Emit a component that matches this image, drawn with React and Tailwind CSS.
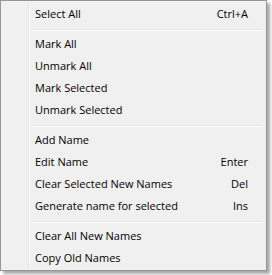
const groups = [
  [{ label: "Select All", key: "Ctrl+A" }],
  [
    { label: "Mark All" },
    { label: "Unmark All" },
    { label: "Mark Selected" },
    { label: "Unmark Selected" },
  ],
  [
    { label: "Add Name" },
    { label: "Edit Name", key: "Enter" },
    { label: "Clear Selected New Names", key: "Del" },
    { label: "Generate name for selected", key: "Ins" },
  ],
  [{ label: "Clear All New Names" }, { label: "Copy Old Names" }],
];

function MenuItem({ label, shortcut }) {
  return (
    <div className="flex h-[22px] items-center justify-between pl-[4px] pr-[18px] text-black">
      <span>{label}</span>
      {shortcut && <span>{shortcut}</span>}
    </div>
  );
}

function Separator() {
  return (
    <div className="h-[8px] pt-[4px] pr-[3px]">
      <div className="border-t border-b border-t-[#e2e3e3] border-b-white" />
    </div>
  );
}

export default function App() {
  return (
    <div className="min-h-screen bg-white">
      <div
        className="flex w-[267px] border border-[#979797] bg-[#f0f0f0] pt-[2px] pb-[1px] text-[11px] shadow-[3px_3px_3px_rgba(0,0,0,0.35)]"
        style={{ fontFamily: '"Open Sans", "Liberation Sans", sans-serif' }}
      >
        <div className="w-[28px] shrink-0 border-r border-r-[#e2e3e3]" />
        <div className="flex-1 border-l border-l-white pl-px">
          {groups.map((items, gi) => (
            <div key={gi}>
              {gi > 0 && <Separator />}
              {items.map((it) => (
                <MenuItem key={it.label} label={it.label} shortcut={it.key} />
              ))}
            </div>
          ))}
        </div>
      </div>
    </div>
  );
}
